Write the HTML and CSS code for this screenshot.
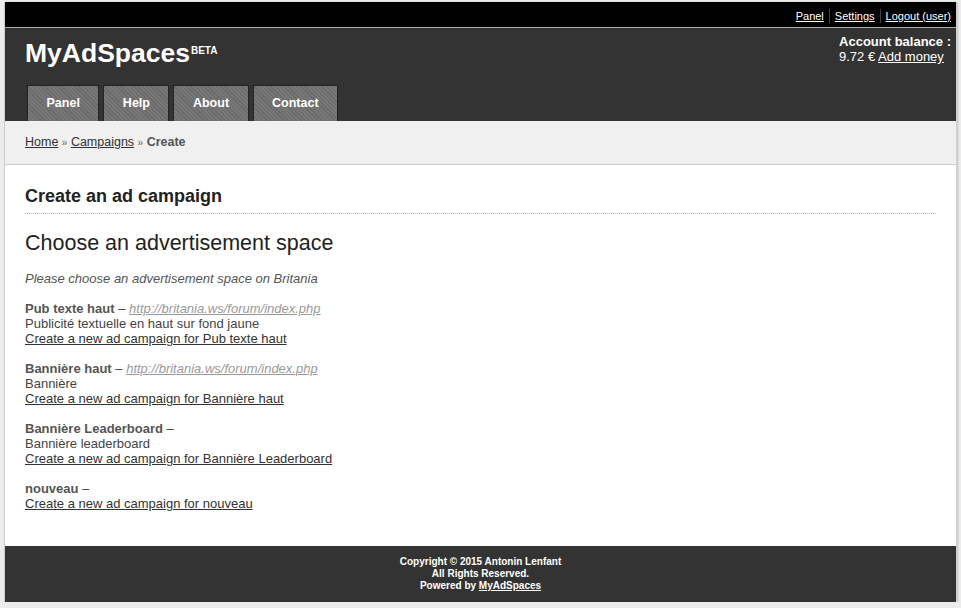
FILE: index.html
```html
<!DOCTYPE html>
<html>
<head>
<meta charset="utf-8">
<title>MyAdSpaces</title>
<link rel="stylesheet" href="styles.css">
</head>
<body>
<div class="page">
  <div class="topbar">
    <a href="#">Panel</a><span class="sep"></span><a href="#">Settings</a><span class="sep"></span><a href="#">Logout (user)</a>
  </div>
  <header class="header">
    <div class="brand">
      <div class="logo">MyAdSpaces<sup>BETA</sup></div>
      <nav class="nav">
        <a href="#" class="tab">Panel</a>
        <a href="#" class="tab">Help</a>
        <a href="#" class="tab">About</a>
        <a href="#" class="tab">Contact</a>
      </nav>
    </div>
    <div class="balance">
      <strong>Account balance :</strong><br>
      9.72 € <a href="#">Add money</a>
    </div>
  </header>
  <div class="crumbs">
    <a href="#">Home</a> <span class="raquo">»</span> <a href="#">Campaigns</a> <span class="raquo">»</span> <span class="current">Create</span>
  </div>
  <main class="content">
    <h2 class="title">Create an ad campaign</h2>
    <h3 class="subtitle">Choose an advertisement space</h3>
    <p class="intro">Please choose an advertisement space on Britania</p>
    <div class="space">
      <b>Pub texte haut</b> – <a class="url" href="#">http://britania.ws/forum/index.php</a><br>
      Publicité textuelle en haut sur fond jaune<br>
      <a class="create" href="#">Create a new ad campaign for Pub texte haut</a>
    </div>
    <div class="space">
      <b>Bannière haut</b> – <a class="url" href="#">http://britania.ws/forum/index.php</a><br>
      Bannière<br>
      <a class="create" href="#">Create a new ad campaign for Bannière haut</a>
    </div>
    <div class="space">
      <b>Bannière Leaderboard</b> – <br>
      Bannière leaderboard<br>
      <a class="create" href="#">Create a new ad campaign for Bannière Leaderboard</a>
    </div>
    <div class="space">
      <b>nouveau</b> – <br>
      <a class="create" href="#">Create a new ad campaign for nouveau</a>
    </div>
  </main>
  <footer class="footer">
    Copyright © 2015 Antonin Lenfant<br>
    All Rights Reserved.<br>
    Powered by <a href="#">MyAdSpaces</a>
  </footer>
</div>
</body>
</html>
```
FILE: styles.css
```css
html, body {
  margin: 0;
  padding: 0;
  background: #ececec;
}
body {
  padding-top: 2px;
  font-family: "Liberation Sans", Arial, sans-serif;
}
.page {
  margin-left: 4px;
  width: 951px;
  border-left: 1px solid #cfcfcf;
  border-right: 1px solid #cfcfcf;
  box-shadow: 1px 0 2px #c4c4c4;
  background: #fff;
}
.topbar {
  background: #000;
  height: 25px;
  border-bottom: 1px solid #aaa;
  display: flex;
  justify-content: flex-end;
  align-items: center;
  padding-right: 5px;
  font-size: 11px;
}
.topbar a {
  color: #fff;
  padding-top: 3px;
}
.topbar .sep {
  width: 1px;
  height: 14px;
  background: #444;
  margin: 3px 5px 0;
}
.header {
  background: #333;
  height: 93px;
  display: flex;
  justify-content: space-between;
  color: #fff;
}
.brand {
  display: flex;
  flex-direction: column;
  justify-content: space-between;
  padding-left: 20px;
}
.logo {
  font-size: 26.5px;
  font-weight: bold;
  margin-top: 10px;
  line-height: 30px;
}
.logo sup {
  font-size: 10px;
  vertical-align: top;
  position: relative;
  top: -2px;
  margin-left: 1px;
}
.nav {
  display: flex;
  gap: 4px;
  padding-left: 2px;
}
.tab {
  display: block;
  height: 35px;
  line-height: 35px;
  padding: 0 18.5px;
  border: 1px solid #222;
  border-bottom: none;
  color: #fff;
  text-decoration: none;
  font-weight: bold;
  font-size: 12.5px;
  background: repeating-linear-gradient(45deg, #6a6a6a 0, #6a6a6a 1px, #777 1px, #777 3px);
}
.balance {
  font-size: 13px;
  line-height: 15px;
  padding: 6px 5px 0 0;
  white-space: nowrap;
}
.balance a {
  color: #fff;
}
.crumbs {
  background: #f0f0f0;
  border-bottom: 1px solid #ccc;
  height: 43px;
  line-height: 43px;
  padding: 0 20px;
  font-size: 12.5px;
  color: #444;
}
.crumbs a {
  color: #333;
}
.crumbs .current {
  color: #555;
  font-weight: bold;
}
.crumbs .raquo {
  font-size: 10px;
  color: #666;
}
.content {
  padding: 20px 20px 35px;
  color: #444;
  font-size: 13px;
  line-height: 15px;
}
.title {
  margin: 0;
  font-size: 18px;
  line-height: 22px;
  color: #222;
  padding-bottom: 6px;
  border-bottom: 1px dotted #bbb;
}
.subtitle {
  margin: 17px 0 0;
  font-size: 21.5px;
  font-weight: normal;
  line-height: 24px;
  color: #222;
}
.intro {
  margin: 16px 0 15px;
  font-style: italic;
  color: #555;
}
.space {
  margin-bottom: 15px;
}
.space:last-child {
  margin-bottom: 0;
}
.space b {
  color: #555;
}
.url {
  color: #999;
  font-style: italic;
}
.create {
  color: #333;
}
.footer {
  background: #333;
  color: #fff;
  text-align: center;
  font-size: 10px;
  font-weight: bold;
  line-height: 12px;
  padding: 10px 0 10px;
}
.footer a {
  color: #fff;
}
```
